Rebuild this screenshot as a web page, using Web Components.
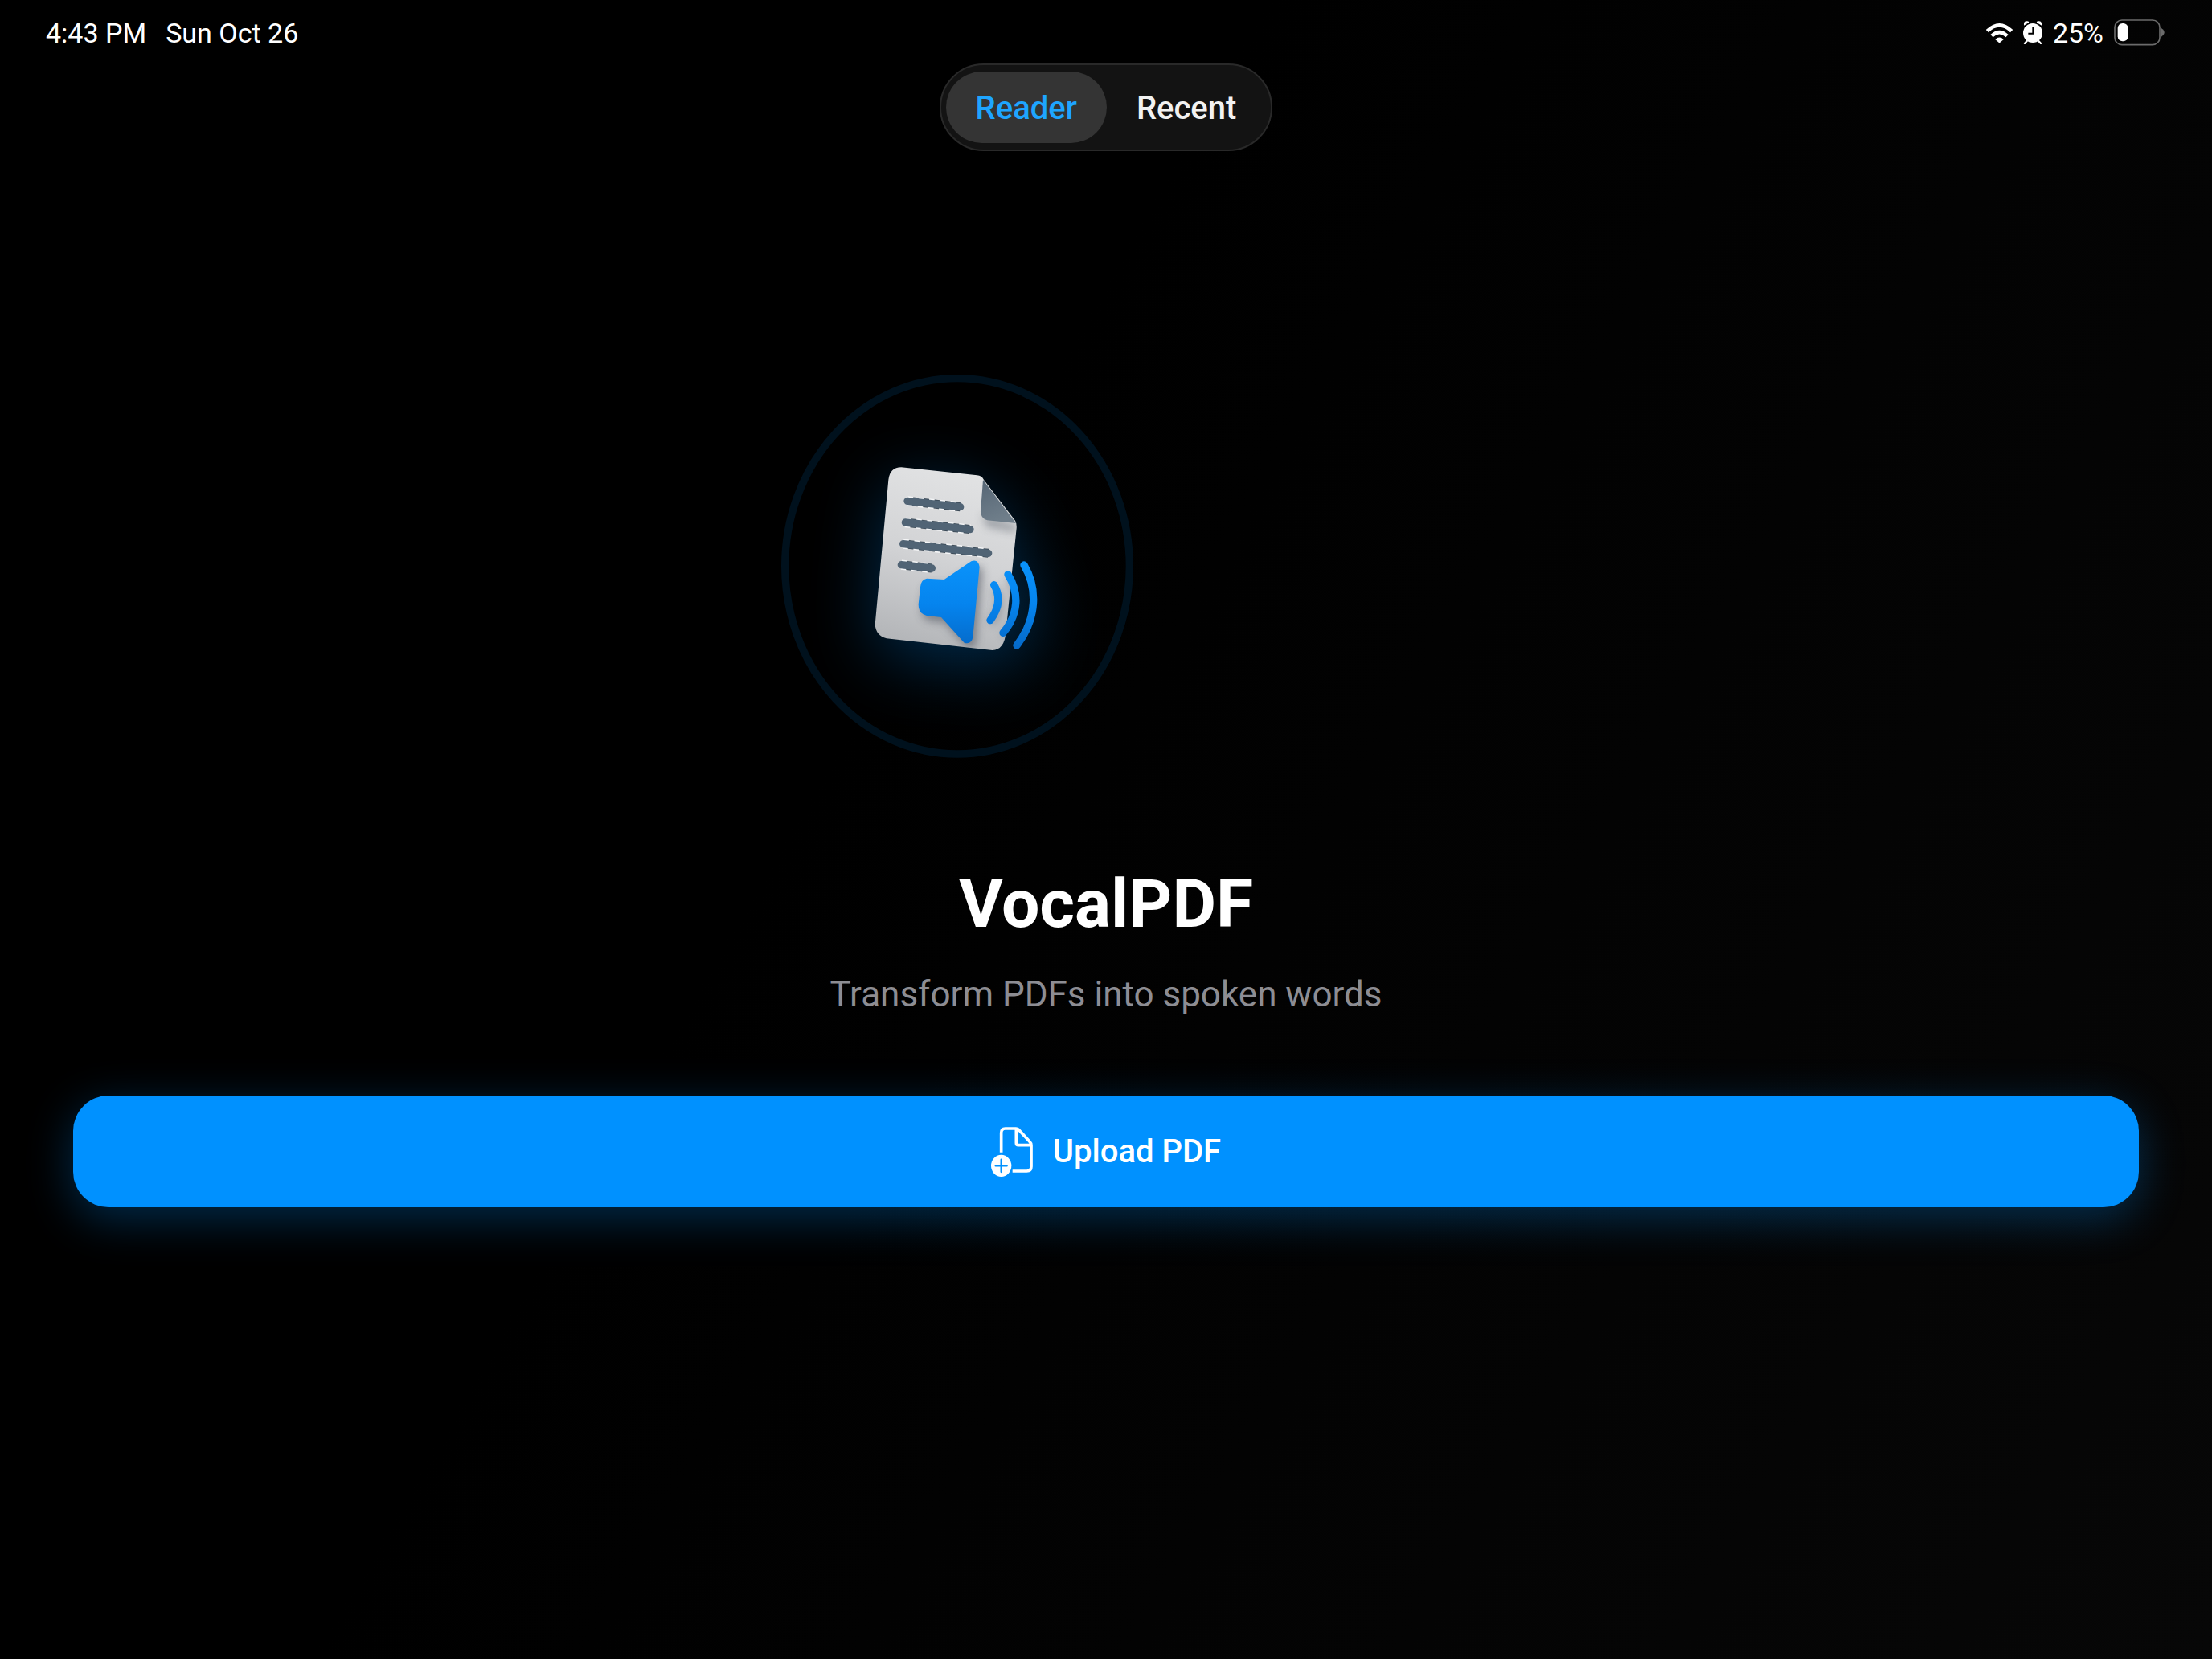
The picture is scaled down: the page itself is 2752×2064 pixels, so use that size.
<!DOCTYPE html>
<html lang="en">
<head>
<meta charset="utf-8">
<meta name="viewport" content="width=device-width, initial-scale=1">
<title>VocalPDF</title>
<style>
    html {
        background: #000;
    }

    body {
        margin: 0;
        min-height: 100vh;
        background: linear-gradient(120deg, #000 40%, #070707 100%);
        color: #fff;
        font-family: Roboto, "Liberation Sans", sans-serif;
    }
</style>
</head>
<body>
<vocal-app></vocal-app>

<script>
class StatusBar extends HTMLElement {
    constructor() {
        super();

        const template = `
            <style>
                :host {
                    display: flex;
                    justify-content: space-between;
                    align-items: center;
                    height: 79px;
                    padding: 2px 59px 0 57px;
                    box-sizing: border-box;
                    font-size: 34px;
                    line-height: 40px;
                }

                .side {
                    display: flex;
                    align-items: center;
                }

                .left {
                    gap: 24px;
                }

                .right {
                    gap: 13px;
                }

                svg {
                    display: block;
                }
            </style>

            <div class="side left">
                <slot name="time"></slot>
                <slot name="date"></slot>
            </div>
            <div class="side right">
                <svg width="33" height="26" viewBox="61 49 100 78" fill="none" stroke="#fff" stroke-width="14" role="img" aria-label="Wi-Fi">
                    <path d="M65 81 Q111 37 157 81" />
                    <path d="M82 99 Q111 72 140 99" />
                    <path d="M95 112 Q111 98 127 112 L111 126 Z" fill="#fff" stroke="none" />
                </svg>
                <svg width="24" height="29" viewBox="196 43 72 87" role="img" aria-label="Alarm">
                    <path d="M199 60 Q197 43 211 44 Q219 45 217 49 Z M265 60 Q267 43 253 44 Q245 45 247 49 Z" fill="#fff" />
                    <path d="M210 118 L202 127 M254 118 L262 127" stroke="#fff" stroke-width="7" stroke-linecap="round" />
                    <circle cx="232" cy="88" r="36" fill="#fff" />
                    <path d="M233 66 V90 H215" fill="none" stroke="#000" stroke-width="6" />
                </svg>
                <slot name="battery"></slot>
                <svg width="63" height="33" viewBox="540 40 189 99" role="img" aria-label="Battery">
                    <rect x="543" y="43" width="168" height="92" rx="27" fill="none" stroke="#6b6b6b" stroke-width="5" />
                    <rect x="554" y="55" width="39" height="67" rx="18" fill="#fff" />
                    <path d="M717 73 Q728 80 728 89 Q728 98 717 105 Z" fill="#6b6b6b" />
                </svg>
            </div>
        `;

        this.attachShadow({ mode: 'open' }).innerHTML = template;
    }
}

class TabItem extends HTMLElement {
    constructor() {
        super();

        const template = `
            <style>
                :host {
                    display: block;
                }

                button {
                    display: block;
                    height: 89px;
                    padding: 2px 37px 0;
                    border: 0;
                    border-radius: 45px;
                    background: none;
                    color: #f2f2f2;
                    font: inherit;
                    font-weight: 500;
                    font-size: 40px;
                    cursor: pointer;
                }

                :host([selected]) button {
                    background: #343434;
                    color: #1ea5ff;
                }
            </style>

            <button type="button"><slot></slot></button>
        `;

        this.attachShadow({ mode: 'open' }).innerHTML = template;
    }

    connectedCallback() {
        this.update();
    }

    update() {
        this.shadowRoot.querySelector('button').setAttribute('aria-pressed', this.hasAttribute('selected'));
    }
}

class TabSwitch extends HTMLElement {
    constructor() {
        super();

        const template = `
            <style>
                :host {
                    display: flex;
                    padding: 8px 6px;
                    border: 2px solid #292929;
                    border-radius: 55px;
                    background: #131313;
                }
            </style>

            <slot></slot>
        `;

        this.attachShadow({ mode: 'open' }).innerHTML = template;
    }

    connectedCallback() {
        this.addEventListener('click', (e) => {
            const picked = e.target.closest('tab-item');
            if (!picked) return;
            this.querySelectorAll('tab-item').forEach((tab) => {
                tab.toggleAttribute('selected', tab === picked);
                tab.update();
            });
        });
    }
}

class AppBadge extends HTMLElement {
    constructor() {
        super();

        const template = `
            <style>
                :host {
                    display: block;
                }

                svg {
                    display: block;
                    overflow: visible;
                }
            </style>

            <svg width="438" height="477" viewBox="97 77 1314 1431" role="img" aria-label="VocalPDF logo">
                <defs>
                    <linearGradient id="paper" x1="0.6" y1="0" x2="0.4" y2="1">
                        <stop offset="0" stop-color="#e2e3e4" />
                        <stop offset="0.5" stop-color="#d2d3d5" />
                        <stop offset="1" stop-color="#b3b5b8" />
                    </linearGradient>
                    <linearGradient id="fold" x1="0" y1="0" x2="0.3" y2="1">
                        <stop offset="0" stop-color="#566675" />
                        <stop offset="1" stop-color="#6f7e8a" />
                    </linearGradient>
                    <linearGradient id="blue" gradientUnits="userSpaceOnUse" x1="0" y1="770" x2="0" y2="1100">
                        <stop offset="0" stop-color="#0a93fb" />
                        <stop offset="0.5" stop-color="#0584ee" />
                        <stop offset="1" stop-color="#0569c8" />
                    </linearGradient>
                    <filter id="glow" x="-1" y="-1" width="3" height="3" color-interpolation-filters="sRGB">
                        <feGaussianBlur stdDeviation="130" />
                    </filter>
                    <filter id="soft" x="-0.5" y="-0.5" width="2" height="2">
                        <feGaussianBlur stdDeviation="16" />
                    </filter>
                    <path id="sheet" d="M497 470 Q502 424 545 423 L828 453 Q845 454 853 470 L970 622 Q976 632 975 650 L935 1040 Q930 1104 885 1106 L490 1062 Q450 1052 447 1010 Z" />
                    <path id="horn" d="M640 838 L705 842 L806 774 Q832 764 837 795 L812 1058 Q806 1086 780 1078 L694 983 L640 977 Q609 970 609 935 L616 870 Q618 842 640 838 Z" />
                    <path id="lines" d="M568 549 L765 571 M560 629 L802 655 M552 709 L870 744 M545 787 L659 800" />
                    <clipPath id="inside"><use href="#sheet" /></clipPath>
                </defs>

                <ellipse cx="754" cy="792" rx="643" ry="701" fill="none" stroke="#00111d" stroke-width="28" />
                <g filter="url(#glow)" fill="#0091ff" opacity="0.3" transform="translate(0 60)">
                    <use href="#sheet" />
                    <path d="M930 780 H1010 Q1090 920 980 1100 H900 Z" />
                </g>
                <use href="#sheet" fill="url(#paper)" />

                <g clip-path="url(#inside)">
                    <path d="M845 600 L975 640 V665 L865 645 Z" fill="#555c66" opacity="0.5" filter="url(#soft)" />
                    <use href="#horn" fill="#3d4350" opacity="0.5" filter="url(#soft)" transform="translate(12 20)" />
                    <path d="M891 862 Q928 925 877 994 M943 823 C985 890 985 970 925 1041" fill="none" stroke="#555a66" stroke-width="29" opacity="0.4" filter="url(#soft)" transform="translate(4 14)" />
                </g>
                <path d="M850 470 L973 632 L866 621 Q841 614 841 588 Z" fill="url(#fold)" />

                <g fill="none">
                    <use href="#lines" stroke="#f4f5f6" stroke-width="37" stroke-dasharray="20 20" />
                    <use href="#lines" stroke="#3b4a57" stroke-width="33" stroke-dasharray="20 20" stroke-dashoffset="20" />
                    <use href="#lines" stroke="#516475" stroke-width="28" stroke-linecap="round" />
                </g>

                <use href="#horn" fill="url(#blue)" />
                <path d="M891 862 Q928 925 877 994 M943 823 C985 890 985 970 925 1041 M1003 788 C1052 870 1055 985 976 1088" fill="none" stroke="url(#blue)" stroke-width="28" stroke-linecap="round" />
            </svg>
        `;

        this.attachShadow({ mode: 'open' }).innerHTML = template;
    }
}

class UploadButton extends HTMLElement {
    constructor() {
        super();

        const template = `
            <style>
                :host {
                    display: block;
                }

                button {
                    display: flex;
                    justify-content: center;
                    align-items: center;
                    gap: 25px;
                    width: 100%;
                    height: 139px;
                    padding: 0;
                    border: 0;
                    border-radius: 44px;
                    background: #0091ff;
                    box-shadow: 0 14px 56px rgba(0, 145, 255, 0.3);
                    color: #fff;
                    font: inherit;
                    font-weight: 500;
                    font-size: 40px;
                    cursor: pointer;
                }
            </style>

            <button type="button">
                <svg width="52" height="62" viewBox="87 62 156 186" fill="none" stroke="#fff" stroke-width="11" aria-hidden="true">
                    <path d="M125 157 V84 Q125 68 140 68 H180 Q186 68 191 73 L231 117 Q237 123 237 130 V210 Q237 227 220 227 H167" />
                    <path d="M181 70 V122 Q181 130 189 130 H235" />
                    <ellipse cx="125" cy="207" rx="38" ry="41" fill="#fff" stroke="none" />
                    <path d="M125 184 V230 M104 207 H146" stroke="#0091ff" stroke-width="7" stroke-linecap="round" />
                </svg>
                <slot></slot>
            </button>
        `;

        this.attachShadow({ mode: 'open' }).innerHTML = template;
    }
}

class VocalApp extends HTMLElement {
    constructor() {
        super();

        const template = `
            <style>
                :host {
                    display: flex;
                    flex-direction: column;
                }

                nav {
                    display: flex;
                    justify-content: center;
                }

                main {
                    display: flex;
                    flex-direction: column;
                    align-items: center;
                    padding: 278px 91px 96px;
                    text-align: center;
                }

                /* the badge sits left of centre */
                app-badge {
                    padding-right: 370px;
                }

                h1 {
                    margin: 132px 0 0;
                    font-size: 84px;
                    line-height: 100px;
                    font-weight: 700;
                }

                p {
                    margin: 32px 0 96px;
                    color: #8d8d93;
                    font-size: 44px;
                    line-height: 60px;
                }

                upload-button {
                    align-self: stretch;
                }
            </style>

            <status-bar>
                <span slot="time">4:43 PM</span>
                <span slot="date">Sun Oct 26</span>
                <span slot="battery">25%</span>
            </status-bar>
            <nav>
                <tab-switch>
                    <tab-item selected>Reader</tab-item>
                    <tab-item>Recent</tab-item>
                </tab-switch>
            </nav>
            <main>
                <app-badge></app-badge>
                <h1>VocalPDF</h1>
                <p>Transform PDFs into spoken words</p>
                <upload-button>Upload PDF</upload-button>
            </main>
        `;

        this.attachShadow({ mode: 'open' }).innerHTML = template;
    }
}

customElements.define('status-bar', StatusBar);
customElements.define('tab-item', TabItem);
customElements.define('tab-switch', TabSwitch);
customElements.define('app-badge', AppBadge);
customElements.define('upload-button', UploadButton);
customElements.define('vocal-app', VocalApp);
</script>
</body>
</html>
